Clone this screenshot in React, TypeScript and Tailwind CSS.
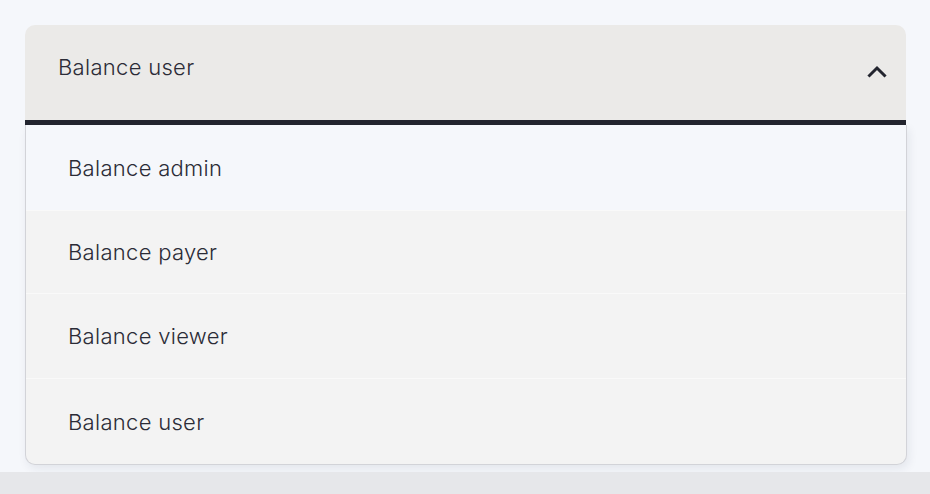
import React from "react";

const items = [
  { t: "Balance admin", c: "flex h-[85px] items-center bg-[#f5f7fb] pl-[42px]" },
  { t: "Balance payer", c: "flex h-[83px] items-center border-t border-[#f9f9f9] pl-[42px]" },
  { t: "Balance viewer", c: "flex h-[85px] items-center border-t border-[#f9f9f9] pl-[42px]" },
  { t: "Balance user", c: "flex h-[86px] items-center border-t border-[#f9f9f9] pl-[42px]" },
];

export default function App() {
  return (
    <div
      className="flex h-[494px] w-full flex-col bg-[#f5f7fb] text-[#2b2c37]"
      style={{ fontFamily: "Inter, 'Noto Sans', sans-serif" }}
    >
      <div className="pl-[25px] pt-[25px]">
        <div className="w-[882px]">
          <button className="flex h-[100px] w-[881px] items-start justify-between rounded-t-[10px] border-b-[5px] border-[#23252f] bg-[#ebeae8] pl-[33px] pr-[18px] pt-[28px] text-left">
            <span className="text-[22px] font-[350] leading-[28px] tracking-[0.3px]">Balance user</span>
            <svg width="22" height="22" viewBox="0 0 22 22" className="mt-[9px]" fill="none">
              <path d="M3.5 13.5 L11 6 L18.5 13.5" stroke="#23252f" strokeWidth="3" strokeLinecap="square" strokeLinejoin="miter" />
            </svg>
          </button>
          <div className="overflow-hidden rounded-b-[10px] border border-t-0 border-[#d2d3d8] bg-[#f3f3f3] shadow-[2px_4px_10px_rgba(30,35,60,0.08)]">
            {items.map((it) => (
              <div key={it.t} className={it.c}>
                <span className="text-[22px] font-[350] leading-[28px] tracking-[0.3px]">{it.t}</span>
              </div>
            ))}
          </div>
        </div>
      </div>
      <div className="mt-auto h-[22px] w-full bg-[#e6e7ea]" />
    </div>
  );
}
